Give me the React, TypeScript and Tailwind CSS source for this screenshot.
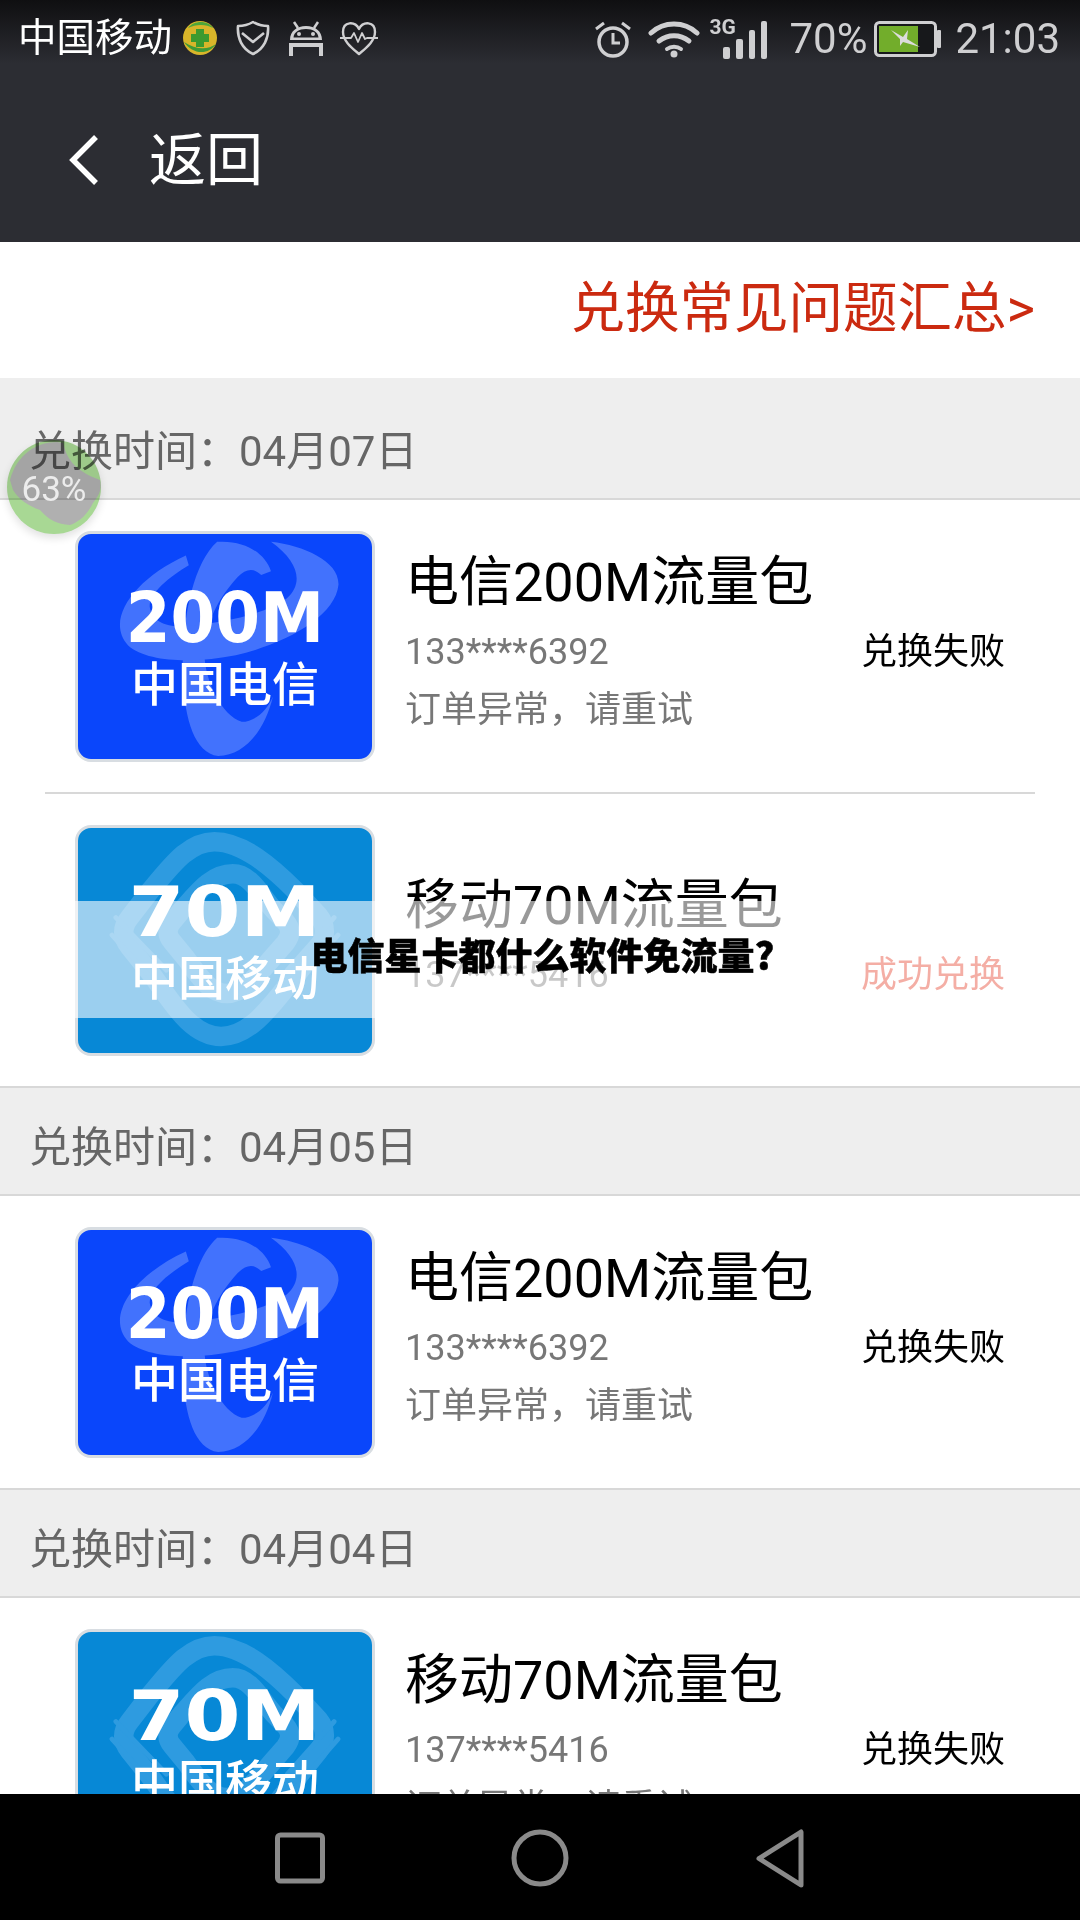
import React from "react";

const FONT = "font-['Roboto','Noto_Sans_CJK_SC',sans-serif]";

function TelecomArt() {
  return (
    <svg viewBox="0 0 298 230" className="absolute inset-0 h-full w-full" fill="#4272fd">
      <path
        fillRule="evenodd"
        d="M141 8C170 6 190 20 196 38L186 42C178 34 170 36 162 44C142 66 128 92 128 122C128 150 146 186 166 192C180 192 192 180 198 166C190 200 170 226 142 227C118 224 108 190 106 148C104 90 116 30 141 8Z"
      />
      <path d="M109 22L112 32C92 44 72 60 72 74C74 90 90 96 112 94C150 90 190 82 212 66C230 50 224 28 196 8C230 12 266 28 265 52C262 84 212 112 160 124C120 132 70 132 50 114C26 88 56 46 109 22Z" />
    </svg>
  );
}

function MobileArt() {
  return (
    <svg viewBox="0 0 300 231" className="absolute inset-0 h-full w-full" fill="none" stroke="#2e9be0" strokeLinecap="round" strokeLinejoin="round">
      <path d="M139 14C112 14 94 40 72 66L52 92C44 102 44 112 52 122L76 152C96 180 116 214 146 214C176 214 198 182 222 152L246 122C254 112 254 100 246 90L222 64C198 40 168 14 139 14Z" strokeWidth="20" />
      <path d="M158 47C136 47 122 66 106 84L96 96C90 103 90 110 96 117L110 134C122 150 134 170 152 170C170 170 184 150 198 134L212 118C218 110 218 103 212 96L200 84C186 68 176 47 158 47Z" strokeWidth="20" />
      <path d="M38 92L90 146M34 110L80 160M262 92L214 146M266 110L222 160" strokeWidth="5" />
    </svg>
  );
}

function Card({ kind }: { kind: "telecom" | "mobile" }) {
  const telecom = kind === "telecom";
  return (
    <div
      className={`relative h-[231px] w-[300px] shrink-0 overflow-hidden rounded-[16px] border-[3px] border-[#d8dde2] text-white ${
        telecom ? "bg-[#0a46fb]" : "bg-[#0788d6]"
      }`}
    >
      {telecom ? <TelecomArt /> : <MobileArt />}
      <div className="relative flex h-full flex-col items-center pt-[44px]">
        <div
          className={`font-['DejaVu_Sans',sans-serif] text-[70px] font-bold leading-[80px] ${
            telecom ? "scale-x-[0.92]" : "scale-x-[1.15]"
          }`}
        >
          {telecom ? "200M" : "70M"}
        </div>
        <div className="mt-[-3px] font-['Noto_Sans_CJK_SC',sans-serif] text-[47px] font-medium leading-[52px]">
          {telecom ? "中国电信" : "中国移动"}
        </div>
      </div>
    </div>
  );
}

function Row({
  kind,
  title,
  phone,
  status,
  note,
  statusClass = "text-black",
}: {
  kind: "telecom" | "mobile";
  title: string;
  phone: string;
  status: string;
  note?: string;
  statusClass?: string;
}) {
  return (
    <div className="flex h-[292px] shrink-0 items-center pl-[75px] pr-[75px]">
      <Card kind={kind} />
      <div className="ml-[30px] flex flex-1 flex-col pb-[6px]">
        <div className="mb-[6px] text-[54px] leading-[70px] text-black">{title}</div>
        <div className="flex items-center justify-between text-[36px] leading-[56px]">
          <span className="text-[#777]">{phone}</span>
          <span className={statusClass}>{status}</span>
        </div>
        {note && <div className="mt-[2px] text-[36px] leading-[56px] text-[#777]">{note}</div>}
      </div>
    </div>
  );
}

function SectionHead({ date, tall }: { date: string; tall?: boolean }) {
  return (
    <div
      className={`flex shrink-0 items-center border-y-2 border-[#d8d8d8] bg-[#eeeeee] pl-[29px] text-[42px] text-[#666] ${
        tall ? "h-[122px] border-t-0 pt-[26px]" : "h-[110px] pt-[12px]"
      }`}
    >
      兑换时间：{date}
    </div>
  );
}

function StatusLeftIcons() {
  return (
    <div className="ml-[10px] flex items-center">
      <svg width="36" height="36" viewBox="0 0 36 36">
        <circle cx="18" cy="18" r="17" fill="#d8b52a" />
        <path d="M2 22C10 34 26 36 34 24C26 30 14 30 2 22Z" fill="#3f9a36" />
        <path d="M6 8C12 0 26 0 31 8C24 4 14 4 6 8Z" fill="#4da63a" />
        <path d="M14 9H22V14H27V22H22V27H14V22H9V14H14Z" fill="#3b9a2f" />
      </svg>
      <svg className="ml-[18px]" width="34" height="36" viewBox="0 0 34 36" fill="none" stroke="#cfcfd1" strokeWidth="2.6" strokeLinejoin="round">
        <path d="M17 2C22 5 27 6 32 6C33 18 28 29 17 34C6 29 1 18 2 6C7 6 12 5 17 2Z" />
        <path d="M6 13L17 22L28 13" />
      </svg>
      <svg className="ml-[18px]" width="36" height="36" viewBox="0 0 36 36" fill="#cfcfd1">
        <path d="M6 2L10 8M30 2L26 8" stroke="#cfcfd1" strokeWidth="2.5" />
        <path d="M2 20C2 11 9 6 18 6C27 6 34 11 34 20ZM5.500 17.500H30.500C30 12 25 9 18 9C11 9 6 12 5.500 17.500Z" fillRule="evenodd" />
        <circle cx="11" cy="14" r="2" />
        <circle cx="25" cy="14" r="2" />
        <path d="M1 23H35V36H31V27H5V36H1Z" />
      </svg>
      <svg className="ml-[16px]" width="38" height="36" viewBox="0 0 38 36" fill="none" stroke="#cfcfd1" strokeWidth="2.4" strokeLinejoin="round">
        <path d="M19 9C15 1 3 1 3 12C3 21 12 28 19 34C26 28 35 21 35 12C35 1 23 1 19 9Z" />
        <path d="M0 18H11L14 13L18 22L22 13L25 19L27 18H38" strokeWidth="1.8" />
      </svg>
    </div>
  );
}

function StatusRightIcons() {
  return (
    <div className="flex items-center pt-[2px]">
      <svg width="36" height="38" viewBox="0 0 36 38" fill="none" stroke="#cfcfd1">
        <circle cx="18" cy="22" r="14" strokeWidth="3.5" />
        <path d="M18 13V23H25" strokeWidth="3" />
        <path d="M1 9L9 3M35 9L27 3" strokeWidth="3" />
      </svg>
      <svg className="ml-[17px]" width="52" height="38" viewBox="0 0 52 38" fill="none" stroke="#cfcfd1" strokeWidth="5" strokeLinecap="round">
        <path d="M3 13C16 1 36 1 49 13" />
        <path d="M11 21C20 14 32 14 41 21" />
        <path d="M19 29C23 26 29 26 33 29" strokeWidth="4" />
        <circle cx="26" cy="34" r="3.500" fill="#cfcfd1" stroke="none" />
      </svg>
      <div className="relative ml-[9px] h-[40px] w-[60px]">
        <span className="absolute left-0 top-[-4px] font-['Roboto',sans-serif] text-[21px] font-bold leading-[24px] text-[#cfcfd1]">3G</span>
        <svg className="absolute bottom-0 right-0" width="46" height="38" viewBox="0 0 46 38" fill="#cfcfd1">
          <rect x="0" y="26" width="7" height="12" rx="2" />
          <rect x="13" y="18" width="7" height="20" rx="2" />
          <rect x="26" y="9" width="6" height="29" rx="2" />
          <rect x="38" y="0" width="6" height="38" rx="2" />
        </svg>
      </div>
      <span className="ml-[20px] text-[42px] leading-none text-[#cfcfd1]">70%</span>
      <svg className="ml-[7px]" width="68" height="36" viewBox="0 0 68 36">
        <rect x="1.500" y="1.500" width="60" height="33" rx="4" fill="#17181b" stroke="#cfcfd1" strokeWidth="3" />
        <rect x="5" y="5" width="39" height="26" fill="#72ad2b" />
        <rect x="63" y="9" width="4" height="18" rx="1" fill="#cfcfd1" />
        <path d="M17 9L29 16L34 9L33 18L46 26L29 21L26 25L26 18Z" fill="#dcdcdc" />
      </svg>
      <span className="ml-[13px] text-[42px] leading-none text-[#cfcfd1]">21:03</span>
    </div>
  );
}

export default function App() {
  return (
    <div className={`relative flex h-[1920px] w-[1080px] flex-col overflow-hidden bg-white ${FONT}`}>
      <div className="h-[242px] shrink-0 bg-[linear-gradient(#0f0f11_0px,#2c2d33_64px)]">
        <div className="flex h-[76px] items-center justify-between pl-[18px] pr-[20px]">
          <div className="flex items-center">
            <span className="text-[38.500px] leading-none text-white">中国移动</span>
            <StatusLeftIcons />
          </div>
          <StatusRightIcons />
        </div>
        <div className="flex h-[168px] items-center pl-[69px]">
          <svg width="30" height="50" viewBox="0 0 30 50" fill="none" stroke="#fff" strokeWidth="5.500">
            <path d="M27 2L4 25L27 48" />
          </svg>
          <span className="ml-[50px] text-[57px] leading-none text-white">返回</span>
        </div>
      </div>

      <div className="flex h-[136px] shrink-0 items-center justify-end pb-[2px] pr-[45px] text-[54.500px] text-[#cb2a10]">
        兑换常见问题汇总&gt;
      </div>

      <div className="min-h-0 flex-1 overflow-hidden">
        <SectionHead date="04月07日" tall />
        <Row kind="telecom" title="电信200M流量包" phone="133****6392" status="兑换失败" note="订单异常，请重试" />
        <div className="mx-[45px] h-[2px] bg-[#d8d8d8]" />
        <Row kind="mobile" title="移动70M流量包" phone="137****5416" status="成功兑换" statusClass="text-[#e4361f]" />
        <SectionHead date="04月05日" />
        <Row kind="telecom" title="电信200M流量包" phone="133****6392" status="兑换失败" note="订单异常，请重试" />
        <SectionHead date="04月04日" />
        <Row kind="mobile" title="移动70M流量包" phone="137****5416" status="兑换失败" note="订单异常，请重试" />
      </div>

      <div className="flex h-[126px] shrink-0 items-center justify-center bg-black pt-[4px]">
        <svg width="560" height="60" viewBox="0 0 560 60" fill="none" stroke="#8a8a8a" strokeWidth="5" strokeLinejoin="round">
          <rect x="17.500" y="6" width="45" height="46" rx="3" />
          <circle cx="280" cy="29" r="26" />
          <path d="M541 3V56L499 29.500Z" />
        </svg>
      </div>

      {/* floating data-usage ball */}
      <div className="absolute left-[7px] top-[440px] h-[94px] w-[94px]">
        <div className="absolute inset-0 rounded-full shadow-[0_4px_8px_rgba(0,0,0,0.12)]" />
        <svg width="94" height="94" viewBox="0 0 94 94" className="absolute inset-0 mix-blend-multiply">
          <circle cx="47" cy="47" r="47" fill="#a8d894" />
          <path d="M3 40C10 14 30 2 50 2L56 3C60 18 66 30 93 40C95 50 92 55 86 63C80 75 72 82 63 85C50 84 42 80 33 70C22 66 12 60 6 50Z" fill="#b0b0b0" />
        </svg>
        <span className="absolute inset-x-0 top-[30px] text-center text-[35px] leading-[40px] text-[#ececec]">63%</span>
      </div>

      {/* caption band across the page */}
      <div className="absolute inset-x-0 top-[901px] flex h-[117px] items-center justify-center bg-white/60 pb-[10px] pl-[5px]">
        <span className="font-['Noto_Sans_CJK_SC',sans-serif] text-[37px] font-black leading-none text-black [-webkit-text-stroke:0.5px_black]">
          电信星卡都什么软件免流量?
        </span>
      </div>
    </div>
  );
}
